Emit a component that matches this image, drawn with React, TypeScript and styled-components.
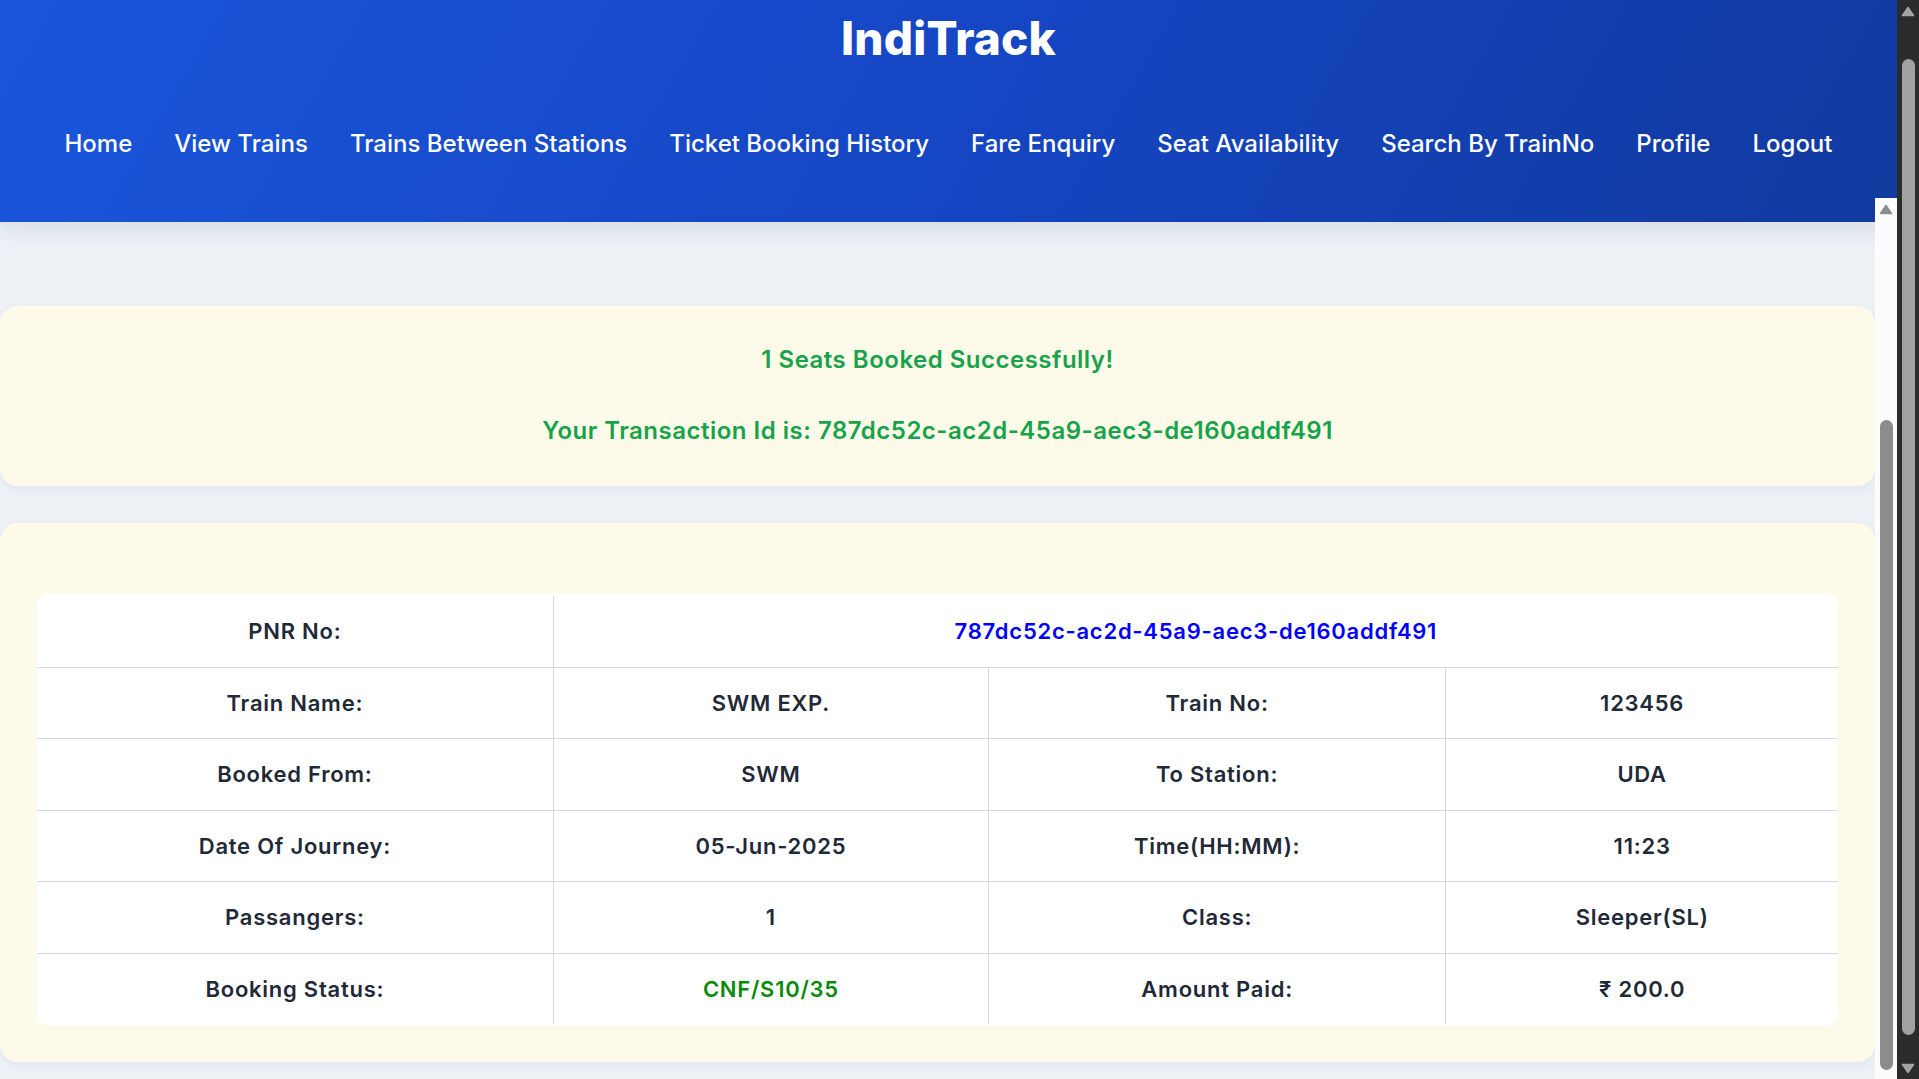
import styled, { createGlobalStyle } from 'styled-components'

const GlobalStyle = createGlobalStyle`
  html, body {
    margin: 0;
    padding: 0;
    background: #eef2f7;
    font-family: Inter, "Noto Sans", sans-serif;
  }
`

const Frame = styled.div`
  display: flex;
  height: 100vh;
  overflow: hidden;
`

const AppColumn = styled.div`
  flex: 1;
  min-width: 0;
  display: flex;
  flex-direction: column;
`

const Header = styled.header`
  box-sizing: border-box;
  height: 222px;
  padding-top: 13px;
  flex-shrink: 0;
  display: flex;
  flex-direction: column;
  align-items: center;
  background: linear-gradient(120deg, #1a56db 0%, #1546c4 50%, #113a9e 100%);
  box-shadow: 0 6px 24px rgba(15, 40, 90, 0.12);
  color: #fff;
`

const Brand = styled.h1`
  margin: 0;
  font-size: 46px;
  line-height: 50px;
  font-weight: 800;
  letter-spacing: 0.2px;
`

const Nav = styled.nav`
  margin-top: 66px;
  display: flex;
  gap: 42px;
`

const NavLink = styled.a`
  color: #fff;
  text-decoration: none;
  font-size: 24px;
  line-height: 30px;
  font-weight: 500;
  cursor: pointer;
`

const Body = styled.div`
  position: relative;
  margin-top: -24px;
  flex: 1;
  min-height: 0;
  display: flex;
`

const Content = styled.main`
  flex: 1;
  min-width: 0;
  padding-top: 108px;
  display: flex;
  flex-direction: column;
  gap: 37px;
  overflow: hidden;
`

const Card = styled.section<{ pad: string }>`
  box-sizing: border-box;
  flex-shrink: 0;
  background: #fefae9;
  border-radius: 18px;
  box-shadow: 0 4px 14px rgba(30, 50, 90, 0.06);
  padding: ${p => p.pad};
`

const Message = styled.h3`
  margin: 0;
  text-align: center;
  color: #16a34a;
  font-size: 24px;
  line-height: 32px;
  font-weight: 600;
  letter-spacing: 0.5px;
  & + & {
    margin-top: 39px;
  }
`

const TableBox = styled.div`
  background: #fff;
  border-radius: 12px;
  overflow: hidden;
  padding: 3px 0 2px;
`

const Table = styled.table`
  width: 100%;
  border-collapse: collapse;
  table-layout: fixed;
`

const Cell = styled.td<{ tone?: string }>`
  height: 70.5px;
  padding: 0 10px;
  text-align: center;
  font-size: 22px;
  font-weight: 600;
  letter-spacing: 0.75px;
  color: ${p => p.tone || '#1f2937'};
  border: 1px solid #d6d8df;

  tr:first-child > & { border-top: none; }
  tr:last-child > & { border-bottom: none; }
  &:first-child { border-left: none; }
  &:last-child { border-right: none; }
`

const Rail = styled.div<{ dark?: boolean }>`
  width: 22px;
  flex-shrink: 0;
  display: flex;
  flex-direction: column;
  align-items: center;
  overflow: hidden;
  background: ${p => (p.dark ? '#2b2b2b' : '#fcfcfc')};
`

const RailButton = styled.div`
  height: 22px;
  flex-shrink: 0;
  display: flex;
  align-items: center;
  justify-content: center;
`

const Thumb = styled.div<{ dark?: boolean }>`
  width: 13px;
  flex-shrink: 0;
  border-radius: 7px;
  background: ${p => (p.dark ? '#a2a2a2' : '#8c8c8c')};
`

const Spacer = styled.div`
  flex: 1;
`

const Arrow = ({ down, color }: { down?: boolean; color: string }) => (
  <svg width='14' height='11' viewBox='0 0 14 11' style={{ transform: down ? 'rotate(180deg)' : undefined }}>
    <polygon points='7,1.5 12.5,9.5 1.5,9.5' fill={color} stroke={color} strokeWidth='1.5' strokeLinejoin='round' />
  </svg>
)

// thumb offset/length mirror the scroll position of the page in the screenshot
const ScrollRail = (props: { dark?: boolean; offset: number; length: number; bottomArrow?: boolean }) => {
  const color = props.dark ? '#a2a2a2' : '#8c8c8c'
  return (
    <Rail dark={props.dark}>
      <RailButton><Arrow color={color} /></RailButton>
      <Thumb dark={props.dark} style={{ marginTop: props.offset, height: props.length }} />
      <Spacer />
      {props.bottomArrow && <RailButton><Arrow down color={color} /></RailButton>}
    </Rail>
  )
}

const links = [
  'Home', 'View Trains', 'Trains Between Stations', 'Ticket Booking History',
  'Fare Enquiry', 'Seat Availability', 'Search By TrainNo', 'Profile', 'Logout',
]

const pnr = '787dc52c-ac2d-45a9-aec3-de160addf491'

const rows: [string, string, string, string, string?][] = [
  ['Train Name:', 'SWM EXP.', 'Train No:', '123456'],
  ['Booked From:', 'SWM', 'To Station:', 'UDA'],
  ['Date Of Journey:', '05-Jun-2025', 'Time(HH:MM):', '11:23'],
  ['Passangers:', '1', 'Class:', 'Sleeper(SL)'],
  ['Booking Status:', 'CNF/S10/35', 'Amount Paid:', '₹ 200.0', '#0a8a0a'],
]

export default function App() {
  return (
    <>
      <GlobalStyle />
      <Frame>
        <AppColumn>
          <Header>
            <Brand>IndiTrack</Brand>
            <Nav>
              {links.map(l => <NavLink key={l}>{l}</NavLink>)}
            </Nav>
          </Header>

          <Body>
            <Content>
              <Card pad='38px 0 39px'>
                <Message>1 Seats Booked Successfully!</Message>
                <Message>Your Transaction Id is: {pnr}</Message>
              </Card>

              <Card pad='70px 37px 36px'>
                <TableBox>
                  <Table>
                    <colgroup>
                      <col style={{ width: 516 }} />
                      <col style={{ width: 435 }} />
                      <col style={{ width: 457 }} />
                      <col style={{ width: 392 }} />
                    </colgroup>
                    <tbody>
                      <tr>
                        <Cell>PNR No:</Cell>
                        <Cell colSpan={3} tone='#0000ff'>{pnr}</Cell>
                      </tr>
                      {rows.map(r => (
                        <tr key={r[0]}>
                          <Cell>{r[0]}</Cell>
                          <Cell tone={r[4]}>{r[1]}</Cell>
                          <Cell>{r[2]}</Cell>
                          <Cell>{r[3]}</Cell>
                        </tr>
                      ))}
                    </tbody>
                  </Table>
                </TableBox>
              </Card>
            </Content>
            <ScrollRail offset={200} length={650} />
          </Body>
        </AppColumn>
        <ScrollRail dark offset={37} length={976} bottomArrow />
      </Frame>
    </>
  )
}
